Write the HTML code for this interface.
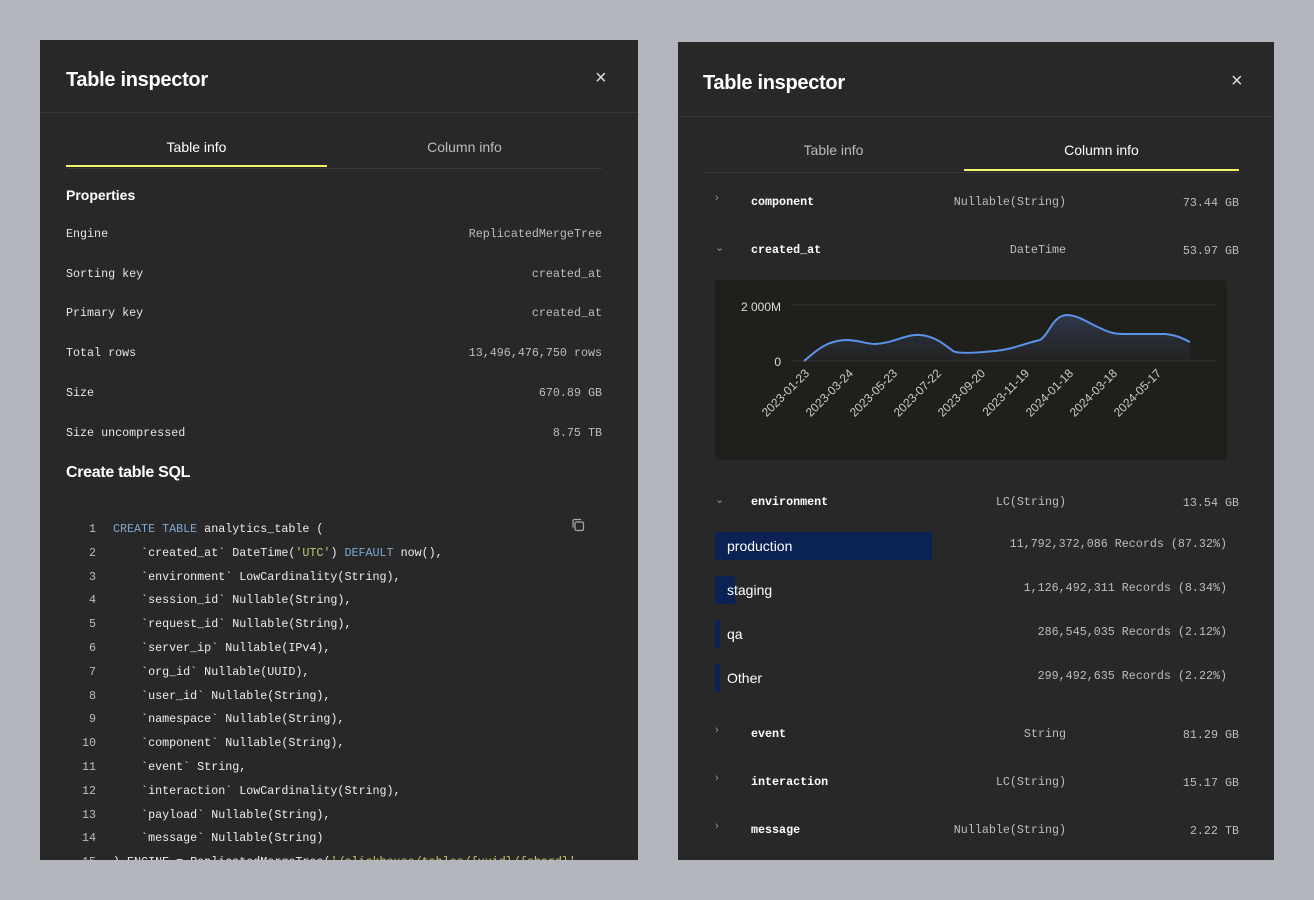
<!DOCTYPE html>
<html><head><meta charset="utf-8"><style>
*{margin:0;padding:0;box-sizing:border-box}
body{width:1314px;height:900px;background:#b3b6bd;position:relative;overflow:hidden;font-family:"Liberation Sans",sans-serif;color:#fff}
.p{position:absolute;background:#282828;overflow:hidden}
.a{position:absolute;white-space:pre}
.t{font-size:20px;font-weight:bold;letter-spacing:-0.3px}
.m{font-family:"Liberation Mono",monospace;font-size:11.7px}
.lbl{color:#e6e6e6}
.val{color:#bdbdbd}
.x{font-size:20px;color:#ddd;font-weight:normal}
.tab{font-size:14px;text-align:center}
.kw{color:#7fa8d2}.st{color:#c5c86a}
.ln{color:#bdbdbd;text-align:right;width:30px}
.code div{display:flex;height:23.8px;line-height:23.8px}
</style></head><body>

<div class="p" style="left:40px;top:40px;width:598px;height:820px">
 <div class="a t" style="left:26px;top:29px">Table inspector</div>
 <div class="a x" style="left:555px;top:27px">×</div>
 <div class="a" style="left:0;top:72px;width:598px;height:1px;background:#383838"></div>
 <div class="a tab" style="left:26px;top:99px;width:261px;color:#fff">Table info</div>
 <div class="a tab" style="left:287px;top:99px;width:275px;color:#bbb">Column info</div>
 <div class="a" style="left:26px;top:128px;width:536px;height:1px;background:#3a3a3a"></div>
 <div class="a" style="left:26px;top:125px;width:261px;height:2px;background:#f4f36a"></div>
 <div class="a" style="left:26px;top:147px;font-size:14px;font-weight:bold">Properties</div>
 <div class="a m lbl" style="left:26px;top:187px">Engine</div><div class="a m val" style="right:36px;top:187px">ReplicatedMergeTree</div>
 <div class="a m lbl" style="left:26px;top:227px">Sorting key</div><div class="a m val" style="right:36px;top:227px">created_at</div>
 <div class="a m lbl" style="left:26px;top:266px">Primary key</div><div class="a m val" style="right:36px;top:266px">created_at</div>
 <div class="a m lbl" style="left:26px;top:306px">Total rows</div><div class="a m val" style="right:36px;top:306px">13,496,476,750 rows</div>
 <div class="a m lbl" style="left:26px;top:346px">Size</div><div class="a m val" style="right:36px;top:346px">670.89 GB</div>
 <div class="a m lbl" style="left:26px;top:386px">Size uncompressed</div><div class="a m val" style="right:36px;top:386px">8.75 TB</div>
 <div class="a t" style="left:26px;top:424px;font-size:16px">Create table SQL</div>
 <svg class="a" style="left:531px;top:478px" width="14" height="14" viewBox="0 0 14 14" fill="none" stroke="#aaa" stroke-width="1.2"><rect x="4" y="4" width="8.5" height="8.5" rx="1.5"/><path d="M2 9.5V3a1.5 1.5 0 0 1 1.5-1.5H10"/></svg>
 <div class="a m code" style="left:26px;top:478px;color:#eee"><div><span class="ln">1</span><span style="margin-left:17px"><span class="kw">CREATE TABLE</span> analytics_table (</span></div><div><span class="ln">2</span><span style="margin-left:17px">    `created_at` DateTime(<span class="st">'UTC'</span>) <span class="kw">DEFAULT</span> now(),</span></div><div><span class="ln">3</span><span style="margin-left:17px">    `environment` LowCardinality(String),</span></div><div><span class="ln">4</span><span style="margin-left:17px">    `session_id` Nullable(String),</span></div><div><span class="ln">5</span><span style="margin-left:17px">    `request_id` Nullable(String),</span></div><div><span class="ln">6</span><span style="margin-left:17px">    `server_ip` Nullable(IPv4),</span></div><div><span class="ln">7</span><span style="margin-left:17px">    `org_id` Nullable(UUID),</span></div><div><span class="ln">8</span><span style="margin-left:17px">    `user_id` Nullable(String),</span></div><div><span class="ln">9</span><span style="margin-left:17px">    `namespace` Nullable(String),</span></div><div><span class="ln">10</span><span style="margin-left:17px">    `component` Nullable(String),</span></div><div><span class="ln">11</span><span style="margin-left:17px">    `event` String,</span></div><div><span class="ln">12</span><span style="margin-left:17px">    `interaction` LowCardinality(String),</span></div><div><span class="ln">13</span><span style="margin-left:17px">    `payload` Nullable(String),</span></div><div><span class="ln">14</span><span style="margin-left:17px">    `message` Nullable(String)</span></div><div><span class="ln">15</span><span style="margin-left:17px">) ENGINE = ReplicatedMergeTree(<span class="st">'/clickhouse/tables/{uuid}/{shard}'</span>,</span></div></div>
</div>

<div class="p" style="left:678px;top:42px;width:596px;height:818px">
 <div class="a t" style="left:25px;top:30px">Table inspector</div>
 <div class="a x" style="left:553px;top:28px">×</div>
 <div class="a" style="left:0;top:74px;width:596px;height:1px;background:#383838"></div>
 <div class="a tab" style="left:25px;top:100px;width:261px;color:#bbb">Table info</div>
 <div class="a tab" style="left:286px;top:100px;width:275px;color:#fff">Column info</div>
 <div class="a" style="left:25px;top:130px;width:536px;height:1px;background:#3a3a3a"></div>
 <div class="a" style="left:286px;top:127px;width:275px;height:2px;background:#f4f36a"></div>
</div>

<div class="a" style="left:715px;top:192px;color:#999;font-size:11px">›</div>
<div class="a m" style="left:751px;top:195px;font-weight:bold">component</div>
<div class="a m val" style="right:248px;top:195px">Nullable(String)</div>
<div class="a m val" style="right:75px;top:196px">73.44 GB</div>

<div class="a" style="left:715px;top:241px;color:#999;font-size:11px">⌄</div>
<div class="a m" style="left:751px;top:243px;font-weight:bold">created_at</div>
<div class="a m val" style="right:248px;top:243px">DateTime</div>
<div class="a m val" style="right:75px;top:244px">53.97 GB</div>

<div class="a" style="left:715px;top:280px;width:512px;height:180px;background:#1f1f1c;border-radius:4px"></div>
<svg class="a" style="left:0;top:0" width="1314" height="900">
 <defs><linearGradient id="g" x1="0" y1="0" x2="0" y2="1"><stop offset="0" stop-color="#34405a" stop-opacity=".8"/><stop offset="1" stop-color="#2a2d35" stop-opacity=".3"/></linearGradient></defs>
 <line x1="793" y1="305" x2="1215" y2="305" stroke="#36362f"/>
 <line x1="793" y1="361" x2="1215" y2="361" stroke="#36362f"/>
 <text x="781" y="311" fill="#ddd" font-size="12" text-anchor="end" font-family="Liberation Sans">2 000M</text>
 <text x="781" y="366" fill="#ddd" font-size="12" text-anchor="end" font-family="Liberation Sans">0</text>
 <path d="M804 361 C815 352 825 341 845 340 C860 340 865 344 875 344 C895 343 905 334 920 335 C935 336 945 345 953 351 C958 354 975 353 995 351 C1015 349 1025 343 1040 340 C1050 334 1052 315 1068 315 C1080 316 1090 324 1100 328 C1110 333 1115 334 1125 334 L1165 334 C1175 335 1180 337 1190 342 L1190 361 L804 361 Z" fill="url(#g)"/>
 <path d="M804 361 C815 352 825 341 845 340 C860 340 865 344 875 344 C895 343 905 334 920 335 C935 336 945 345 953 351 C958 354 975 353 995 351 C1015 349 1025 343 1040 340 C1050 334 1052 315 1068 315 C1080 316 1090 324 1100 328 C1110 333 1115 334 1125 334 L1165 334 C1175 335 1180 337 1190 342" fill="none" stroke="#5b93e8" stroke-width="2"/>
 <g fill="#ccc" font-size="12" font-family="Liberation Sans" text-anchor="end">
  <text transform="translate(810,374) rotate(-45)">2023-01-23</text>
  <text transform="translate(854,374) rotate(-45)">2023-03-24</text>
  <text transform="translate(898,374) rotate(-45)">2023-05-23</text>
  <text transform="translate(942,374) rotate(-45)">2023-07-22</text>
  <text transform="translate(986,374) rotate(-45)">2023-09-20</text>
  <text transform="translate(1030,374) rotate(-45)">2023-11-19</text>
  <text transform="translate(1074,374) rotate(-45)">2024-01-18</text>
  <text transform="translate(1118,374) rotate(-45)">2024-03-18</text>
  <text transform="translate(1162,374) rotate(-45)">2024-05-17</text>
 </g>
</svg>

<div class="a" style="left:715px;top:493px;color:#999;font-size:11px">⌄</div>
<div class="a m" style="left:751px;top:495px;font-weight:bold">environment</div>
<div class="a m val" style="right:248px;top:495px">LC(String)</div>
<div class="a m val" style="right:75px;top:496px">13.54 GB</div>

<div class="a" style="left:715px;top:532px;width:217px;height:28px;background:#0b2254"></div>
<div class="a" style="left:715px;top:576px;width:20px;height:28px;background:#0b2254"></div>
<div class="a" style="left:715px;top:620px;width:5px;height:28px;background:#0b2254"></div>
<div class="a" style="left:715px;top:664px;width:5px;height:28px;background:#0b2254"></div>
<div class="a" style="left:727px;top:538px;font-size:14px">production</div>
<div class="a" style="left:727px;top:582px;font-size:14px">staging</div>
<div class="a" style="left:727px;top:626px;font-size:14px">qa</div>
<div class="a" style="left:727px;top:670px;font-size:14px">Other</div>
<div class="a m val" style="right:87px;top:537px">11,792,372,086 Records (87.32%)</div>
<div class="a m val" style="right:87px;top:581px">1,126,492,311 Records (8.34%)</div>
<div class="a m val" style="right:87px;top:625px">286,545,035 Records (2.12%)</div>
<div class="a m val" style="right:87px;top:669px">299,492,635 Records (2.22%)</div>

<div class="a" style="left:715px;top:724px;color:#999;font-size:11px">›</div>
<div class="a m" style="left:751px;top:727px;font-weight:bold">event</div>
<div class="a m val" style="right:248px;top:727px">String</div>
<div class="a m val" style="right:75px;top:728px">81.29 GB</div>

<div class="a" style="left:715px;top:772px;color:#999;font-size:11px">›</div>
<div class="a m" style="left:751px;top:775px;font-weight:bold">interaction</div>
<div class="a m val" style="right:248px;top:775px">LC(String)</div>
<div class="a m val" style="right:75px;top:776px">15.17 GB</div>

<div class="a" style="left:715px;top:820px;color:#999;font-size:11px">›</div>
<div class="a m" style="left:751px;top:823px;font-weight:bold">message</div>
<div class="a m val" style="right:248px;top:823px">Nullable(String)</div>
<div class="a m val" style="right:75px;top:824px">2.22 TB</div>
</body></html>
